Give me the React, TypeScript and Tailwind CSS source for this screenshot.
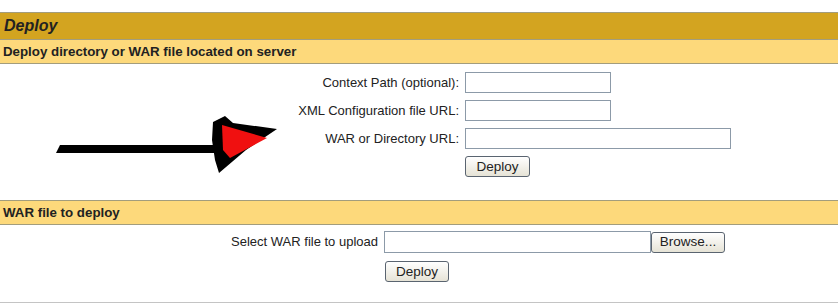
import React from 'react';

const btn =
  "h-[21px] px-[6px] border border-[#5a6470] rounded-[3px] bg-gradient-to-b from-white to-[#e6e3d6] text-[13.5px] text-[#222] leading-none";
const field = "h-[21px] border border-[#8c9aa8] bg-white";

// little hand-drawn arrow pointing at the form
const Arrow = () => (
  <svg className="absolute inset-0 pointer-events-none" width="838" height="304">
    <polygon points="60,145 219,145 219,153 56,153" fill="#000" />
    <polygon points="213,122 225,116 233,123 277,129 246,150 219,173 215,160 212,140" fill="#000" />
    <polygon points="222,125 267,138 230,158 223,150" fill="#f01010" />
  </svg>
);

export default function App() {
  return (
    <div className="relative w-[838px] h-[304px] bg-white text-[13px] text-[#222] font-['Liberation_Sans',Arial,sans-serif]">
      <div className="h-[12px]" />

      {/* --- main title bar --- */}
      <div className="h-[28px] border-t border-b border-[#a39d7c] bg-[#d3a420] flex items-center pl-[4px]">
        <span className="text-[16px] font-bold italic text-[#222]">Deploy</span>
      </div>

      {/* --- deploy from server --- */}
      <div className="h-[24px] border-b border-[#a39d7c] bg-[#fdd97b] flex items-center pl-[3px]">
        <span className="font-bold text-[13.3px]">Deploy directory or WAR file located on server</span>
      </div>
      <div className="h-[136px] pt-[8px] flex flex-col gap-[7px]">
        <div className="flex items-center">
          <label className="w-[459px] text-right">Context Path (optional):</label>
          <input className={`${field} ml-[6px] w-[146px]`} />
        </div>
        <div className="flex items-center">
          <label className="w-[459px] text-right">XML Configuration file URL:</label>
          <input className={`${field} ml-[6px] w-[146px]`} />
        </div>
        <div className="flex items-center">
          <label className="w-[459px] text-right">WAR or Directory URL:</label>
          <input className={`${field} ml-[6px] w-[266px]`} />
        </div>
        <div className="flex pl-[465px]">
          <button className={`${btn} w-[65px]`}>Deploy</button>
        </div>
      </div>

      {/* --- upload a war --- */}
      <div className="h-[25px] border-t border-b border-[#a39d7c] bg-[#fdd97b] flex items-center pl-[3px]">
        <span className="font-bold text-[13.3px]">WAR file to deploy</span>
      </div>
      <div className="h-[78px] pt-[6px] flex flex-col gap-[8px] border-b border-[#c4c4c4]">
        <div className="flex items-center">
          <label className="w-[378px] text-right">Select WAR file to upload</label>
          <input className={`${field} ml-[6px] w-[267px] h-[22px]`} />
          <button className={`${btn} w-[74px]`}>Browse...</button>
        </div>
        <div className="flex pl-[385px]">
          <button className={`${btn} w-[64px] h-[19px]`}>Deploy</button>
        </div>
      </div>

      <Arrow />
    </div>
  );
}
